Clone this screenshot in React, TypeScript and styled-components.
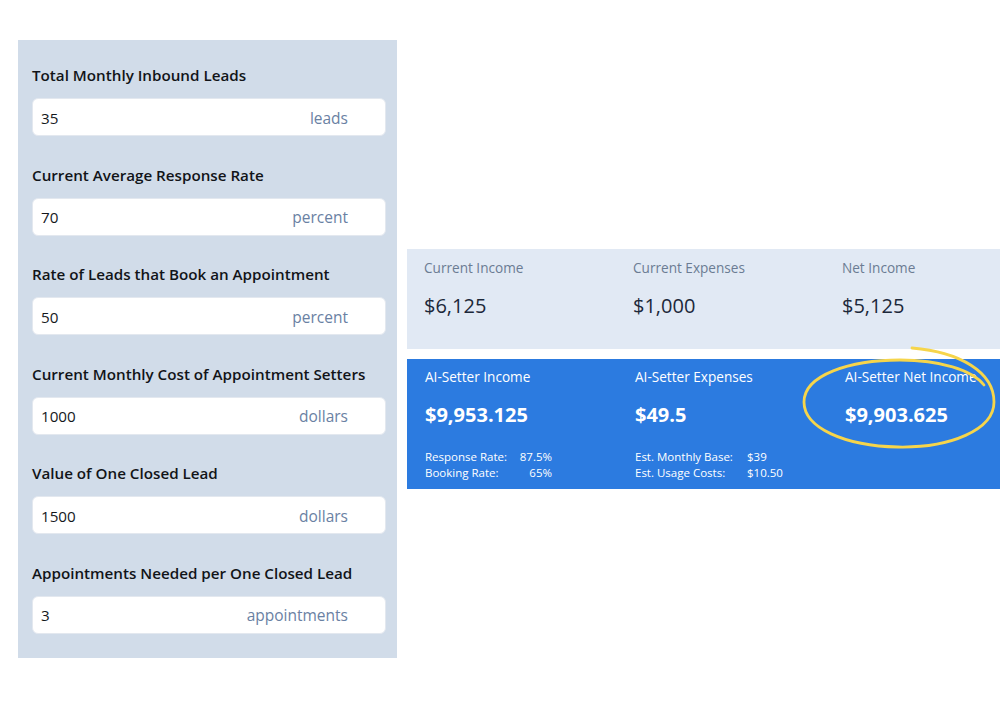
import styled, { createGlobalStyle } from 'styled-components';

const GlobalStyle = createGlobalStyle`
  html, body {
    margin: 0;
    padding: 0;
    background: #ffffff;
    font-family: "Open Sans", "Liberation Sans", sans-serif;
  }
`;

interface IField {
  label: string;
  value: string;
  unit: string;
}

interface IStat {
  label: string;
  value: string;
}

const fields: IField[] = [
  { label: 'Total Monthly Inbound Leads', value: '35', unit: 'leads' },
  { label: 'Current Average Response Rate', value: '70', unit: 'percent' },
  { label: 'Rate of Leads that Book an Appointment', value: '50', unit: 'percent' },
  { label: 'Current Monthly Cost of Appointment Setters', value: '1000', unit: 'dollars' },
  { label: 'Value of One Closed Lead', value: '1500', unit: 'dollars' },
  { label: 'Appointments Needed per One Closed Lead', value: '3', unit: 'appointments' },
];

const currentStats: IStat[] = [
  { label: 'Current Income', value: '$6,125' },
  { label: 'Current Expenses', value: '$1,000' },
  { label: 'Net Income', value: '$5,125' },
];

const Page = styled.div`
  display: flex;
  align-items: flex-start;
  padding: 40px 0 0 18px;
  gap: 10px;
`;

const InputPanel = styled.section`
  width: 379px;
  box-sizing: border-box;
  background: #d1dce9;
  padding: 25px 11px 24px 14px;
  display: flex;
  flex-direction: column;
  gap: 28.5px;
`;

const Field = styled.div`
  display: flex;
  flex-direction: column;
  gap: 13px;
`;

const FieldLabel = styled.label`
  font-size: 15.2px;
  line-height: 20px;
  font-weight: 600;
  color: #111418;
`;

const InputBox = styled.div`
  height: 38px;
  box-sizing: border-box;
  background: #ffffff;
  border: 1px solid #e3e8ef;
  border-radius: 6px;
  display: flex;
  align-items: center;
  justify-content: space-between;
  padding: 1px 37px 0 8px;
  font-size: 15.2px;
`;

const InputValue = styled.span`
  color: #14171c;
`;

const Unit = styled.span`
  color: #6a81a3;
  font-size: 15.5px;
`;

const Results = styled.div`
  flex: 1;
  margin-top: 209px;
  display: flex;
  flex-direction: column;
  gap: 10px;
`;

const StatRow = styled.div<{ $accent?: boolean }>`
  position: relative;
  height: ${(p) => (p.$accent ? 130 : 100)}px;
  box-sizing: border-box;
  background: ${(p) => (p.$accent ? '#2c7be0' : '#e1e9f4')};
  color: ${(p) => (p.$accent ? '#ffffff' : '#1c283a')};
  padding: ${(p) => (p.$accent ? '9px 0 8px 18px' : '10px 0 0 17px')};
  display: grid;
  grid-template-columns: ${(p) => (p.$accent ? '210px 210px 1fr' : '209px 209px 1fr')};
`;

const Stat = styled.div`
  display: flex;
  flex-direction: column;
`;

const StatLabel = styled.div<{ $accent?: boolean }>`
  font-size: 13.6px;
  line-height: 18px;
  color: ${(p) => (p.$accent ? '#ffffff' : '#6b7c93')};
`;

const StatValue = styled.div<{ $accent?: boolean }>`
  margin-top: 15px;
  font-size: 20px;
  line-height: 28px;
  font-weight: ${(p) => (p.$accent ? 700 : 400)};
`;

const Details = styled.div<{ $cols: string }>`
  margin-top: 20px;
  display: grid;
  grid-template-columns: ${(p) => p.$cols};
  font-size: 11.5px;
  line-height: 16px;
`;

const DetailValue = styled.span<{ $right?: boolean }>`
  text-align: ${(p) => (p.$right ? 'right' : 'left')};
`;

const Circle = styled.svg`
  position: absolute;
  left: 385px;
  top: -20px;
  width: 210px;
  height: 120px;
  overflow: visible;
  pointer-events: none;
`;

const App = () => {
  return (
    <>
      <GlobalStyle />
      <Page>
        <InputPanel>
          {fields.map((f) => (
            <Field key={f.label}>
              <FieldLabel>{f.label}</FieldLabel>
              <InputBox>
                <InputValue>{f.value}</InputValue>
                <Unit>{f.unit}</Unit>
              </InputBox>
            </Field>
          ))}
        </InputPanel>

        <Results>
          <StatRow>
            {currentStats.map((s) => (
              <Stat key={s.label}>
                <StatLabel>{s.label}</StatLabel>
                <StatValue>{s.value}</StatValue>
              </Stat>
            ))}
          </StatRow>

          <StatRow $accent>
            <Stat>
              <StatLabel $accent>AI-Setter Income</StatLabel>
              <StatValue $accent>$9,953.125</StatValue>
              <Details $cols="92px 35px">
                <span>Response Rate:</span>
                <DetailValue $right>87.5%</DetailValue>
                <span>Booking Rate:</span>
                <DetailValue $right>65%</DetailValue>
              </Details>
            </Stat>
            <Stat>
              <StatLabel $accent>AI-Setter Expenses</StatLabel>
              <StatValue $accent>$49.5</StatValue>
              <Details $cols="112px auto">
                <span>Est. Monthly Base:</span>
                <DetailValue>$39</DetailValue>
                <span>Est. Usage Costs:</span>
                <DetailValue>$10.50</DetailValue>
              </Details>
            </Stat>
            <Stat>
              <StatLabel $accent>AI-Setter Net Income</StatLabel>
              <StatValue $accent>$9,903.625</StatValue>
            </Stat>
            {/* hand-drawn highlight around net income */}
            <Circle viewBox="0 0 210 120">
              <path
                d="M 120 9 C 168 13, 202 33, 202 63 C 202 91, 158 109, 106 108 C 53 107, 12 89, 12 63 C 12 36, 58 21, 108 21 C 148 21, 180 31, 192 46"
                fill="none"
                stroke="#f6d54b"
                strokeWidth={2.8}
                strokeLinecap="round"
              />
            </Circle>
          </StatRow>
        </Results>
      </Page>
    </>
  );
};

export default App;
